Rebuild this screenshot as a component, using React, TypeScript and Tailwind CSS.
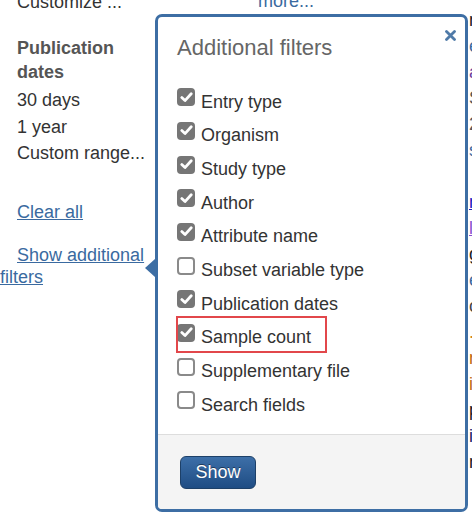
import { useState } from 'react'

// "Additional filters" popover, opened from the search sidebar's
// "Show additional filters" link. The highlighted row is an annotation box.

type Filter = { label: string; checked: boolean; marked?: boolean }

const initialFilters: Filter[] = [
  { label: 'Entry type', checked: true },
  { label: 'Organism', checked: true },
  { label: 'Study type', checked: true },
  { label: 'Author', checked: true },
  { label: 'Attribute name', checked: true },
  { label: 'Subset variable type', checked: false },
  { label: 'Publication dates', checked: true },
  { label: 'Sample count', checked: true, marked: true },
  { label: 'Supplementary file', checked: false },
  { label: 'Search fields', checked: false },
]

// the page column that sits behind the popover, only its edge shows
const edge: { ch: string; color: string; underline?: boolean }[] = [
  { ch: 'm', color: 'text-[#222]' },
  { ch: 'e', color: 'text-[#3a6aa0]' },
  { ch: 'a', color: 'text-[#6b3fa0]' },
  { ch: 'S', color: 'text-[#555]' },
  { ch: '2', color: 'text-[#555]' },
  { ch: 's', color: 'text-[#3a6aa0]' },
  { ch: '', color: '' },
  { ch: 'n', color: 'text-[#2020c0]', underline: true },
  { ch: 'l', color: 'text-[#8a4fd0]', underline: true },
  { ch: 'g', color: 'text-[#222]' },
  { ch: 'e', color: 'text-[#3a6aa0]' },
  { ch: 'c', color: 'text-[#444]' },
  { ch: '.', color: 'text-[#d08020]' },
  { ch: 'n', color: 'text-[#c06a10]' },
  { ch: 'i', color: 'text-[#c06a10]' },
  { ch: 'p', color: 'text-[#222]' },
  { ch: 'i', color: 'text-[#1a1a60]' },
  { ch: 'm', color: 'text-[#222]' },
]

function Check({ checked }: { checked: boolean }) {
  if (!checked) {
    return (
      <span className="mb-[9px] block h-[18px] w-[18px] shrink-0 rounded-[4px] border-2 border-[#8a8a8a] bg-white" />
    )
  }
  return (
    <span className="mb-[9px] flex h-[18px] w-[18px] shrink-0 items-center justify-center rounded-[4px] bg-[#767676]">
      <svg width="13" height="11" viewBox="0 0 13 11" fill="none">
        <path d="M1.8 5.6 L5 8.6 L11.2 1.8" stroke="white" strokeWidth="2.8" strokeLinecap="round" strokeLinejoin="round" />
      </svg>
    </span>
  )
}

export default function App() {
  const [filters, setFilters] = useState(initialFilters)

  const toggle = (i: number) =>
    setFilters((fs) => fs.map((f, j) => (j === i ? { ...f, checked: !f.checked } : f)))

  return (
    <div className="flex h-[513px] w-[472px] overflow-hidden bg-white font-['Liberation_Sans',Arial,sans-serif] text-[18px] text-[#333]">
      {/* sidebar */}
      <div className="w-[155px] shrink-0">
        <div className="mt-[-11px] pl-[17px]">
          <div className="leading-[26px]">Customize ...</div>
          <div className="mt-[21px] font-bold leading-[24px] text-[#555]">
            Publication
            <br />
            dates
          </div>
          <div className="mt-[3px] leading-[26.5px]">
            <div>30 days</div>
            <div>1 year</div>
            <div>Custom range...</div>
          </div>
          <a href="#" className="mt-[32px] block leading-[26px] text-[#3a6aa0] underline">
            Clear all
          </a>
        </div>
        <a href="#" className="mt-[19px] block indent-[17px] leading-[22px] text-[#3a6aa0] underline">
          Show additional filters
        </a>
      </div>

      {/* middle column with the popover on top */}
      <div className="flex w-[313px] shrink-0 flex-col">
        <div className="mt-[-12px] pl-[103px] leading-[26px] text-[#3a6aa0]">more...</div>

        <div className="relative h-[498px] rounded-[7px] border-[3px] border-[#3d6ea4] bg-white">
          <span className="absolute left-[-13px] top-[242px] h-0 w-0 border-y-[9px] border-r-[10px] border-y-transparent border-r-[#3d6ea4]" />

          <button className="absolute right-[8px] top-[12px] p-[1px]" aria-label="Close">
            <svg width="11" height="11" viewBox="0 0 11 11">
              <path d="M1.5 1.5 L9.5 9.5 M9.5 1.5 L1.5 9.5" stroke="#4f7aa8" strokeWidth="2.8" strokeLinecap="round" />
            </svg>
          </button>

          <div className="flex h-full flex-col">
            <div className="px-[19px] pt-[18px]">
              <div className="text-[22px] leading-[26px] text-[#666]">Additional filters</div>
              <div className="mt-[24px] flex flex-col">
                {filters.map((f, i) => (
                  <label
                    key={f.label}
                    onClick={() => toggle(i)}
                    className="relative flex h-[33.67px] cursor-pointer items-center gap-[6px] leading-[22px]"
                  >
                    <Check checked={f.checked} />
                    <span>{f.label}</span>
                    {f.marked && (
                      <span className="pointer-events-none absolute left-[-1px] top-[-5px] h-[37px] w-[151px] border-2 border-[#e2474b]" />
                    )}
                  </label>
                ))}
              </div>
            </div>

            <div className="mt-auto h-[75px] rounded-b-[4px] border-t border-[#dddddd] bg-[#f4f4f4] pl-[22px] pt-[21px]">
              <button className="h-[33px] w-[76px] rounded-[6px] border border-[#1d4068] bg-gradient-to-b from-[#3d6fa8] to-[#1f4d84] text-[18px] text-white [text-shadow:0_-1px_0_rgba(0,0,0,0.45)]">
                Show
              </button>
            </div>
          </div>
        </div>
      </div>

      {/* edge of the results column */}
      <div className="ml-[1px] mt-[7px] flex flex-col leading-[26px]">
        {edge.map((e, i) => (
          <span key={i} className={`${e.color} ${e.underline ? 'underline' : ''} h-[26px]`}>
            {e.ch}
          </span>
        ))}
      </div>
    </div>
  )
}
